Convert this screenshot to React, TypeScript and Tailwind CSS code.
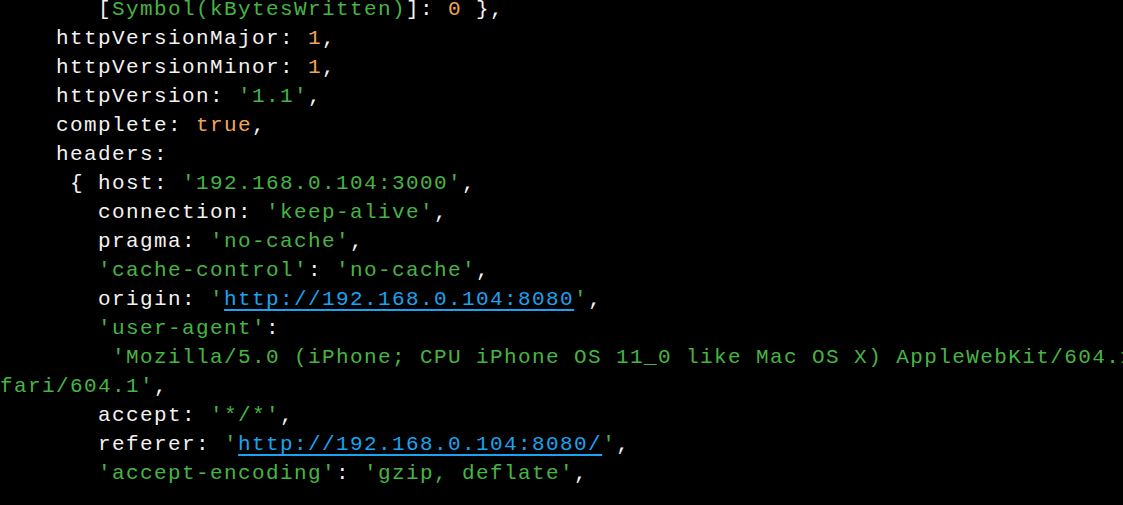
import React from "react";

const W = ({ children }: { children: React.ReactNode }) => <span className="text-[#f2f2f2]">{children}</span>;
const G = ({ children }: { children: React.ReactNode }) => <span className="text-[#45b545]">{children}</span>;
const O = ({ children }: { children: React.ReactNode }) => <span className="text-[#f2a55a]">{children}</span>;
const L = ({ children }: { children: React.ReactNode }) => (
  <span className="text-[#1aa3f0] underline decoration-[#1aa3f0] underline-offset-[4px] decoration-[1.5px]">{children}</span>
);

const Line = ({ children }: { children?: React.ReactNode }) => (
  <div className="h-[29px] leading-[29px] whitespace-pre">{children}</div>
);

export default function App() {
  return (
    <div className="w-[1123px] h-[505px] bg-black overflow-hidden">
      <div
        className="-mt-[5px] text-[21px] tracking-[1.4px] text-[#f2f2f2]"
        style={{ fontFamily: '"Liberation Mono", "DejaVu Sans Mono", monospace' }}
      >
        <Line>
          <W>{"       ["}</W>
          <G>Symbol(kBytesWritten)</G>
          <W>{"]: "}</W>
          <O>0</O>
          <W>{" },"}</W>
        </Line>
        <Line>
          <W>{"    httpVersionMajor: "}</W>
          <O>1</O>
          <W>,</W>
        </Line>
        <Line>
          <W>{"    httpVersionMinor: "}</W>
          <O>1</O>
          <W>,</W>
        </Line>
        <Line>
          <W>{"    httpVersion: "}</W>
          <G>'1.1'</G>
          <W>,</W>
        </Line>
        <Line>
          <W>{"    complete: "}</W>
          <O>true</O>
          <W>,</W>
        </Line>
        <Line>
          <W>{"    headers:"}</W>
        </Line>
        <Line>
          <W>{"     { host: "}</W>
          <G>'192.168.0.104:3000'</G>
          <W>,</W>
        </Line>
        <Line>
          <W>{"       connection: "}</W>
          <G>'keep-alive'</G>
          <W>,</W>
        </Line>
        <Line>
          <W>{"       pragma: "}</W>
          <G>'no-cache'</G>
          <W>,</W>
        </Line>
        <Line>
          <W>{"       "}</W>
          <G>'cache-control'</G>
          <W>{": "}</W>
          <G>'no-cache'</G>
          <W>,</W>
        </Line>
        <Line>
          <W>{"       origin: "}</W>
          <G>'</G>
          <L>http://192.168.0.104:8080</L>
          <G>'</G>
          <W>,</W>
        </Line>
        <Line>
          <W>{"       "}</W>
          <G>'user-agent'</G>
          <W>:</W>
        </Line>
        <Line>
          <G>{"        'Mozilla/5.0 (iPhone; CPU iPhone OS 11_0 like Mac OS X) AppleWebKit/604.1.38 (KHTML, like Gecko) Version/11.0 Mobile/15A372 Sa"}</G>
        </Line>
        <Line>
          <G>fari/604.1'</G>
          <W>,</W>
        </Line>
        <Line>
          <W>{"       accept: "}</W>
          <G>'*/*'</G>
          <W>,</W>
        </Line>
        <Line>
          <W>{"       referer: "}</W>
          <G>'</G>
          <L>http://192.168.0.104:8080/</L>
          <G>'</G>
          <W>,</W>
        </Line>
        <Line>
          <W>{"       "}</W>
          <G>'accept-encoding'</G>
          <W>{": "}</W>
          <G>'gzip, deflate'</G>
          <W>,</W>
        </Line>
      </div>
    </div>
  );
}
